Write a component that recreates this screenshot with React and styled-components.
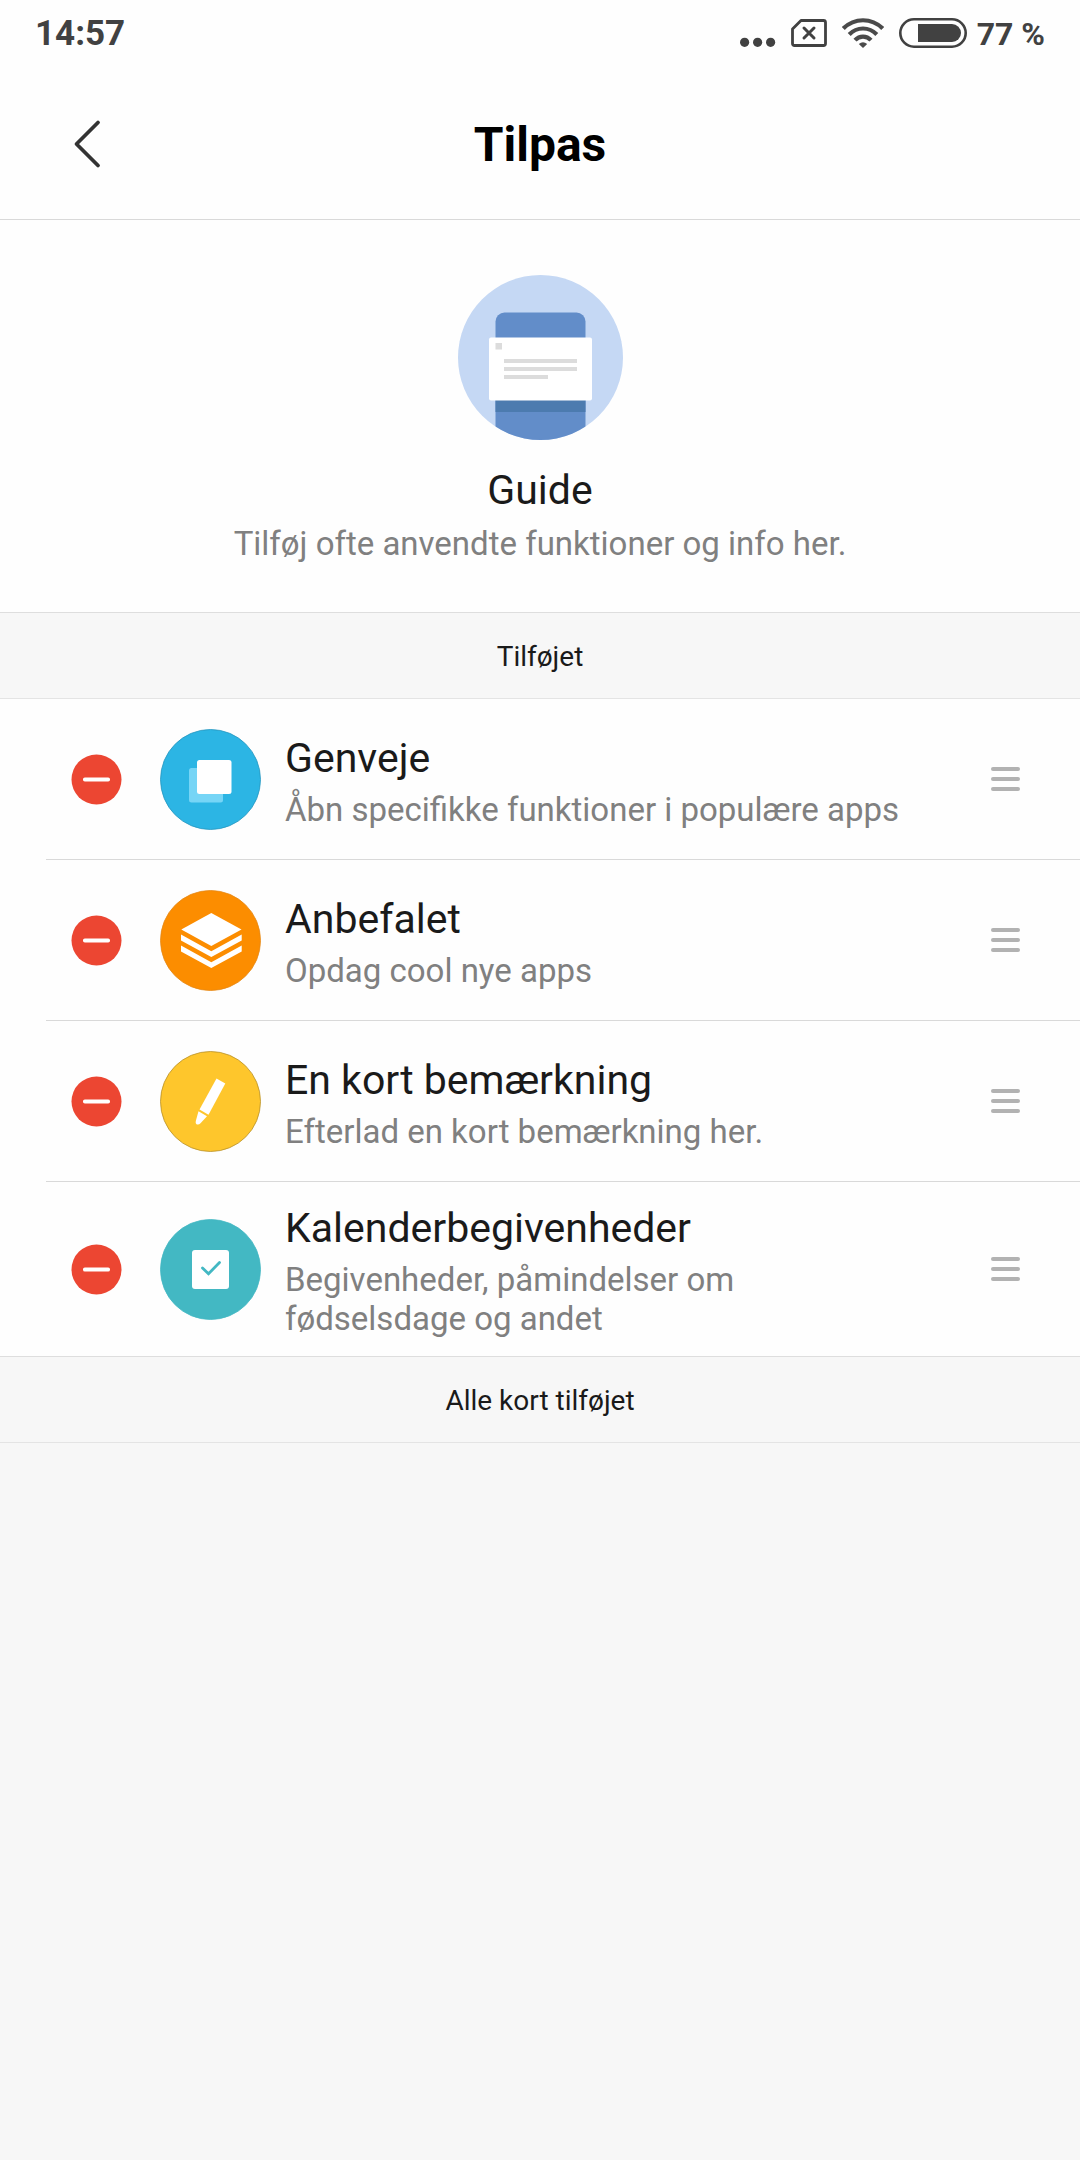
import React from "react";
import styled, { createGlobalStyle } from "styled-components";

const GlobalStyle = createGlobalStyle`
  * {
    box-sizing: border-box;
  }
  body {
    margin: 0;
    background: #f7f7f7;
    color: #1a1a1a;
    font-family: Roboto, "Noto Sans", sans-serif;
  }
`;

const Page = styled.div`
  width: 100%;
`;

const StatusBar = styled.div`
  display: flex;
  align-items: center;
  justify-content: space-between;
  height: 66px;
  padding: 0 35px;
  background: #fefefe;
  color: #414141;
  font-weight: 700;
  line-height: 42px;
`;

const StatusIcons = styled.div`
  display: flex;
  align-items: center;
  gap: 15px;
`;

const StatusText = styled.span`
  padding-top: 2px;
  font-size: ${({ $small }) => ($small ? 32 : 35)}px;
  margin-left: ${({ $small }) => ($small ? -5 : 0)}px;
`;

const Header = styled.header`
  display: grid;
  grid-template-columns: 1fr auto 1fr;
  align-items: center;
  height: 154px;
  padding: 2px 72px 0;
  background: #fefefe;
  border-bottom: 1px solid #d9d9d9;
`;

const IconButton = styled.button`
  display: flex;
  flex: none;
  justify-self: start;
  padding: 0;
  border: 0;
  background: none;
  cursor: pointer;
`;

const Title = styled.h1`
  margin: 0;
  padding-top: 2px;
  color: #000;
  font-size: 48px;
  font-weight: 700;
  line-height: 58px;
`;

const Guide = styled.section`
  display: flex;
  flex-direction: column;
  align-items: center;
  padding: 55px 48px 49px;
  background: #fefefe;
  text-align: center;
`;

const GuideTitle = styled.h2`
  margin: 26px 0 10px;
  font-size: 41px;
  font-weight: 400;
  line-height: 48px;
`;

const Description = styled.p`
  margin: 0;
  color: #808080;
  font-size: 33px;
  line-height: 39px;
`;

const SectionLabel = styled.h2`
  margin: 0;
  padding: 27px 48px 25px;
  border-top: 1px solid #dedede;
  border-bottom: 1px solid #e4e4e4;
  background: #f7f7f7;
  font-size: 28px;
  font-weight: 400;
  line-height: 33px;
  text-align: center;
`;

const CardList = styled.ul`
  margin: 0;
  padding: 0 0 0 46px;
  background: #fefefe;
  list-style: none;
`;

const CardRow = styled.li`
  display: flex;
  align-items: center;
  min-height: 161px;
  padding: 18px 60px 18px 25px;

  &:not(:last-child) {
    border-bottom: 1px solid #d9d9d9;
  }
`;

const CardIcon = styled.svg`
  flex: none;
  width: 101px;
  height: 101px;
  margin: 0 24px 0 38px;
`;

const CardText = styled.div`
  flex: 1;
  padding-top: 4px;
`;

const CardTitle = styled.h3`
  margin: 0 0 8px;
  font-size: 41px;
  font-weight: 400;
  line-height: 48px;
`;

const DragHandle = styled(IconButton)`
  margin-left: 72px;
  cursor: grab;
`;

const MoreDots = () => (
  <svg width="36" height="30" viewBox="0 0 36 30" fill="#414141">
    <circle cx="4.6" cy="24.3" r="4.6" />
    <circle cx="17.6" cy="24.3" r="4.6" />
    <circle cx="30.6" cy="24.3" r="4.6" />
  </svg>
);

const NoSim = () => (
  <svg width="36" height="30" viewBox="0 0 36 30" fill="none" stroke="#414141">
    <path
      d="M10 2.5H32.5Q34.5 2.5 34.5 4.5V25.5Q34.5 27.5 32.5 27.5H3.5Q1.5 27.5 1.5 25.5V11Z"
      strokeWidth="2.8"
      strokeLinejoin="round"
    />
    <path d="M13 10L23 20M23 10L13 20" strokeWidth="3" strokeLinecap="round" />
  </svg>
);

const Wifi = () => (
  <svg width="42" height="30" viewBox="0 0 42 30" fill="none" stroke="#4a4a4a" strokeWidth="4.2">
    <path d="M1.3 10.5C12.5-0.5 29.5-0.5 40.7 10.5" />
    <path d="M7.2 16.5C15 8.5 27 8.5 34.8 16.5" />
    <path d="M13 22.2C17.5 17.3 24.5 17.3 29 22.2" />
    <path d="M16.8 26Q21 22.5 25.2 26L21 30Z" fill="#4a4a4a" stroke="none" />
  </svg>
);

const Battery = () => (
  <svg width="68" height="30" viewBox="0 0 68 30">
    <rect x="1.3" y="1.3" width="65.4" height="27.4" rx="13.7" fill="none" stroke="#414141" strokeWidth="2.6" />
    <path d="M19 6H53A9 9 0 0 1 53 24H19Z" fill="#414141" />
  </svg>
);

const BackIcon = () => (
  <svg width="32" height="50" viewBox="0 0 32 50" fill="none" stroke="#333">
    <path d="M26 3.5L4.5 25L26 46.5" strokeWidth="3.8" strokeLinecap="round" strokeLinejoin="round" />
  </svg>
);

const GuidePicture = () => (
  <svg width="165" height="165" viewBox="0 0 165 165">
    <defs>
      <clipPath id="guide-circle">
        <circle cx="82.5" cy="82.5" r="82.5" />
      </clipPath>
    </defs>
    <g clipPath="url(#guide-circle)">
      <rect width="165" height="165" fill="#c5d8f4" />
      <rect x="37.5" y="37.5" width="90" height="140" rx="9" fill="#628dc9" />
      <rect x="37.5" y="120" width="90" height="17" fill="#4c7baf" />
      <rect x="31" y="62.5" width="103" height="63" rx="2" fill="#fff" />
    </g>
    <g fill="#dcdcdc">
      <rect x="37.5" y="68" width="6.5" height="6.5" />
      <rect x="46" y="84" width="73" height="4" />
      <rect x="46" y="92" width="73" height="4" />
      <rect x="46" y="100" width="44" height="4" />
    </g>
  </svg>
);

const MinusIcon = () => (
  <svg width="51" height="51" viewBox="0 0 51 51">
    <circle cx="25.5" cy="25.5" r="25" fill="#ec4632" />
    <rect x="12" y="23.5" width="27" height="4" rx="1.8" fill="#fff" />
  </svg>
);

const HandleIcon = () => (
  <svg width="29" height="24" viewBox="0 0 29 24" fill="#b2b2b2">
    <rect y="0" width="29" height="4" rx="2" />
    <rect y="10" width="29" height="4" rx="2" />
    <rect y="20" width="29" height="4" rx="2" />
  </svg>
);

const cards = [
  {
    title: "Genveje",
    text: "Åbn specifikke funktioner i populære apps",
    color: "#2cb5e4",
    edge: "#2596bf",
    glyph: (
      <>
        <rect x="29" y="39" width="34" height="34.5" rx="2.5" fill="#76d5f6" />
        <rect x="37" y="31" width="34.5" height="34" rx="2.5" fill="#fff" />
      </>
    ),
  },
  {
    title: "Anbefalet",
    text: "Opdag cool nye apps",
    color: "#fc8d00",
    edge: "#e58815",
    glyph: (
      <g fill="#fff">
        <path d="M51.3 23L81.5 39.5L51.3 56L21.3 39.5Z" />
        <path d="M21 44.5L51.3 61.3L81.7 44.5V50.5L51.3 67L21 50.5Z" />
        <path d="M21 55.5L51.3 72.3L81.7 55.5V61.5L51.3 78L21 61.5Z" />
      </g>
    ),
  },
  {
    title: "En kort bemærkning",
    text: "Efterlad en kort bemærkning her.",
    color: "#fec62c",
    edge: "#b8912a",
    glyph: (
      <g fill="#fff">
        <path d="M56.5 27.5L65.3 32.5L48.5 63.8L39.5 58.5Z" />
        <path d="M38.5 60.2L47 65.3L40.5 72.3Q38.5 74.3 36.5 73.2Q35.2 72.5 35.8 70Z" />
      </g>
    ),
  },
  {
    title: "Kalenderbegivenheder",
    text: "Begivenheder, påmindelser om fødselsdage og andet",
    color: "#43b8c3",
    edge: "#43b8c3",
    glyph: (
      <>
        <rect x="32" y="31" width="37" height="39" rx="3" fill="#fff" />
        <path
          d="M42.5 49L48.5 54.8L59.5 43.5"
          fill="none"
          stroke="#43b8c3"
          strokeWidth="2.8"
          strokeLinecap="round"
        />
      </>
    ),
  },
];

const App = () => {
  const rows = cards.map(({ title, text, color, edge, glyph }) => (
    <CardRow key={title}>
      <IconButton type="button" aria-label={`Fjern ${title}`}>
        <MinusIcon />
      </IconButton>
      <CardIcon viewBox="0 0 101 101" aria-hidden="true">
        <circle cx="50.5" cy="50.5" r="50" fill={color} stroke={edge} strokeWidth="0.8" />
        {glyph}
      </CardIcon>
      <CardText>
        <CardTitle>{title}</CardTitle>
        <Description>{text}</Description>
      </CardText>
      <DragHandle type="button" aria-label={`Flyt ${title}`}>
        <HandleIcon />
      </DragHandle>
    </CardRow>
  ));

  return (
    <Page>
      <GlobalStyle />
      <StatusBar>
        <StatusText>14:57</StatusText>
        <StatusIcons>
          <MoreDots />
          <NoSim />
          <Wifi />
          <Battery />
          <StatusText $small>77 %</StatusText>
        </StatusIcons>
      </StatusBar>
      <Header>
        <IconButton type="button" aria-label="Tilbage">
          <BackIcon />
        </IconButton>
        <Title>Tilpas</Title>
      </Header>
      <main>
        <Guide>
          <GuidePicture />
          <GuideTitle>Guide</GuideTitle>
          <Description>Tilføj ofte anvendte funktioner og info her.</Description>
        </Guide>
        <SectionLabel>Tilføjet</SectionLabel>
        <CardList>{rows}</CardList>
        <SectionLabel>Alle kort tilføjet</SectionLabel>
      </main>
    </Page>
  );
};

export default App;
